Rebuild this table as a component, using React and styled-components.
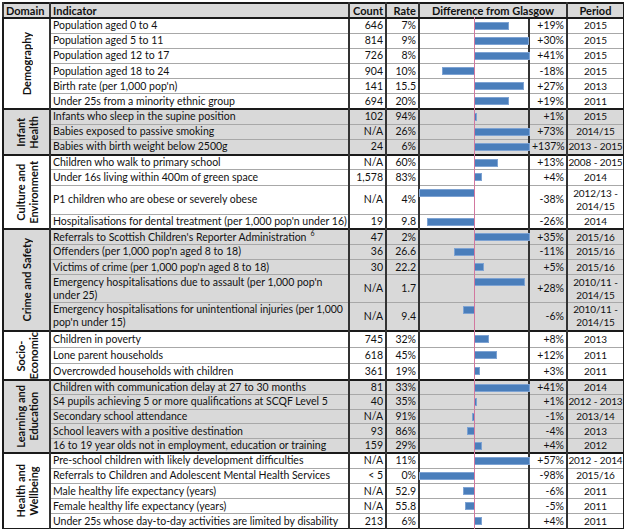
import React from 'react';
import styled, { createGlobalStyle } from 'styled-components';

const GlobalStyle = createGlobalStyle`
  html, body {
    margin: 0;
    padding: 0;
    background: #fff;
  }
  body {
    font-family: Lato, "Liberation Sans", sans-serif;
  }
`;

const Page = styled.div`
  padding: 2px 0 0 2px;
`;

const Table = styled.table`
  border-collapse: collapse;
  table-layout: fixed;
  width: 621px;
  border: 2px solid #1a1a1a;
  font-size: 10.5px;
  line-height: 13px;
  color: #111;
`;

const HeadCell = styled.th`
  background: #d9d9d9;
  font-weight: 700;
  font-size: 11px;
  height: 12px;
  padding: 0 2px;
  text-align: ${p => p.$align || 'left'};
  border-left: 2px solid #333;
  border-bottom: 2px solid #1a1a1a;
  white-space: nowrap;
`;

const Row = styled.tr`
  height: ${p => p.$h}px;
  background: ${p => (p.$shaded ? '#d9d9d9' : '#fff')};
`;

const Cell = styled.td`
  padding: 0 2px;
  vertical-align: middle;
  text-align: ${p => p.$align || 'left'};
  border-top: ${p => (p.$first ? '2px solid #1a1a1a' : '1px solid #a8a8a8')};
  border-left: 2px solid #333;
  white-space: ${p => (p.$wrap ? 'normal' : 'nowrap')};
  overflow: hidden;
`;

const PeriodCell = styled(Cell)`
  padding: 0;
  text-align: center;
  font-size: 10px;
  letter-spacing: -0.1px;
`;

const DomainCell = styled.td`
  border-top: 2px solid #1a1a1a;
  border-left: 2px solid #1a1a1a;
  padding: 0;
  text-align: center;
  vertical-align: middle;
`;

const DomainLabel = styled.div`
  writing-mode: vertical-rl;
  transform: rotate(180deg);
  font-weight: 700;
  font-size: 11px;
  line-height: 13px;
  margin: 0 auto;
  text-align: center;
  white-space: nowrap;
`;

const BarCell = styled.td`
  padding: 0;
  vertical-align: top;
  border-top: ${p => (p.$first ? '2px solid #1a1a1a' : '1px solid #a8a8a8')};
  border-left: 2px solid #333;
`;

const Track = styled.div`
  position: relative;
  height: ${p => p.$h}px;
  &::after {
    content: '';
    position: absolute;
    left: 54px;
    top: -2px;
    bottom: -3px;
    width: 1px;
    background: #d2789f;
  }
`;

const Bar = styled.div`
  position: absolute;
  top: 3px;
  height: 8px;
  background: #4a7ebb;
  border: 1px solid #7ea3d3;
  box-sizing: border-box;
`;

const Sup = styled.sup`
  font-size: 7px;
  vertical-align: 5px;
  line-height: 0;
  margin-left: 4px;
`;

const groups = [
  {
    lines: ['Demography'],
    shaded: false,
    rows: [
      ['Population aged 0 to 4', '646', '7%', 19, '2015'],
      ['Population aged 5 to 11', '814', '9%', 30, '2015'],
      ['Population aged 12 to 17', '726', '8%', 41, '2015'],
      ['Population aged 18 to 24', '904', '10%', -18, '2015'],
      ['Birth rate (per 1,000 pop\'n)', '141', '15.5', 27, '2013'],
      ['Under 25s from a minority ethnic group', '694', '20%', 19, '2011'],
    ],
  },
  {
    lines: ['Infant', 'Health'],
    shaded: true,
    rows: [
      ['Infants who sleep in the supine position', '102', '94%', 1, '2015'],
      ['Babies exposed to passive smoking', 'N/A', '26%', 73, '2014/15'],
      ['Babies with birth weight below 2500g', '24', '6%', 137, '2013 - 2015'],
    ],
  },
  {
    lines: ['Culture and', 'Environment'],
    shaded: false,
    rows: [
      ['Children who walk to primary school', 'N/A', '60%', 13, '2008 - 2015'],
      ['Under 16s living within 400m of green space', '1,578', '83%', 4, '2014'],
      ['P1 children who are obese or severely obese', 'N/A', '4%', -38, ['2012/13 -', '2014/15'], 29],
      ['Hospitalisations for dental treatment (per 1,000 pop\'n under 16)', '19', '9.8', -26, '2014'],
    ],
  },
  {
    lines: ['Crime and Safety'],
    shaded: true,
    rows: [
      ['Referrals to Scottish Children\'s Reporter Administration', '47', '2%', 35, '2015/16', 15, '6'],
      ['Offenders (per 1,000 pop\'n aged 8 to 18)', '36', '26.6', -11, '2015/16'],
      ['Victims of crime (per 1,000 pop\'n aged 8 to 18)', '30', '22.2', 5, '2015/16'],
      ['Emergency hospitalisations due to assault (per 1,000 pop\'n under 25)', 'N/A', '1.7', 28, ['2010/11 -', '2014/15'], 28],
      ['Emergency hospitalisations for unintentional injuries (per 1,000 pop\'n under 15)', 'N/A', '9.4', -6, ['2010/11 -', '2014/15'], 28],
    ],
  },
  {
    lines: ['Socio-', 'Economic'],
    shaded: false,
    rows: [
      ['Children in poverty', '745', '32%', 8, '2013', 16.3],
      ['Lone parent households', '618', '45%', 12, '2011', 16.3],
      ['Overcrowded households with children', '361', '19%', 3, '2011', 16.3],
    ],
  },
  {
    lines: ['Learning and', 'Education'],
    shaded: true,
    rows: [
      ['Children with communication delay at 27 to 30 months', '81', '33%', 41, '2014', 14.6],
      ['S4 pupils achieving 5 or more qualifications at SCQF Level 5', '40', '35%', 1, '2012 - 2013', 14.6],
      ['Secondary school attendance', 'N/A', '91%', -1, '2013/14', 14.6],
      ['School leavers with a positive destination', '93', '86%', -4, '2013', 14.6],
      ['16 to 19 year olds not in employment, education or training', '159', '29%', 4, '2012', 14.6],
    ],
  },
  {
    lines: ['Health and', 'Wellbeing'],
    shaded: false,
    rows: [
      ['Pre-school children with likely development difficulties', 'N/A', '11%', 57, '2012 - 2014'],
      ['Referrals to Children and Adolescent Mental Health Services', '< 5', '0%', -98, '2015/16'],
      ['Male healthy life expectancy (years)', 'N/A', '52.9', -6, '2011'],
      ['Female healthy life expectancy (years)', 'N/A', '55.8', -5, '2011'],
      ['Under 25s whose day-to-day activities are limited by disability', '213', '6%', 4, '2011'],
    ],
  },
];

const HALF = 55;
const SCALE = 1.8;

function DiffBar({ value, h }) {
  const len = Math.max(1, Math.min(HALF, Math.round(Math.abs(value) * SCALE)));
  const left = value >= 0 ? HALF - 1 : HALF - 1 - len;
  return (
    <Track $h={Math.floor(h) - 2}>
      <Bar style={{ left, width: len + 1 }} />
    </Track>
  );
}

function fmt(v) {
  return (v > 0 ? '+' : '') + v + '%';
}

export default function App() {
  return (
    <Page>
      <GlobalStyle />
      <Table>
        <colgroup>
          <col style={{ width: 47 }} />
          <col style={{ width: 299 }} />
          <col style={{ width: 37 }} />
          <col style={{ width: 33 }} />
          <col style={{ width: 110 }} />
          <col style={{ width: 38 }} />
          <col style={{ width: 57 }} />
        </colgroup>
        <thead>
          <tr>
            <HeadCell>Domain</HeadCell>
            <HeadCell>Indicator</HeadCell>
            <HeadCell $align="right">Count</HeadCell>
            <HeadCell $align="right">Rate</HeadCell>
            <HeadCell colSpan={2} $align="center">Difference from Glasgow</HeadCell>
            <HeadCell $align="center">Period</HeadCell>
          </tr>
        </thead>
        <tbody>
          {groups.map(g =>
            g.rows.map((r, i) => {
              const [ind, count, rate, diff, period, h = 15.2, sup] = r;
              const first = i === 0;
              return (
                <Row key={g.lines[0] + i} $h={h} $shaded={g.shaded}>
                  {first && (
                    <DomainCell rowSpan={g.rows.length}>
                      <DomainLabel>
                        {g.lines.map((l, k) => (
                          <div key={k}>{l}</div>
                        ))}
                      </DomainLabel>
                    </DomainCell>
                  )}
                  <Cell $first={first} $wrap={h > 17}>
                    {ind}
                    {sup && <Sup>{sup}</Sup>}
                  </Cell>
                  <Cell $first={first} $align="right">{count}</Cell>
                  <Cell $first={first} $align="right">{rate}</Cell>
                  <BarCell $first={first}>
                    <DiffBar value={diff} h={h} />
                  </BarCell>
                  <Cell $first={first} $align="right">{fmt(diff)}</Cell>
                  <PeriodCell $first={first}>
                    {Array.isArray(period)
                      ? period.map((p, k) => <div key={k}>{p}</div>)
                      : period}
                  </PeriodCell>
                </Row>
              );
            })
          )}
        </tbody>
      </Table>
    </Page>
  );
}
